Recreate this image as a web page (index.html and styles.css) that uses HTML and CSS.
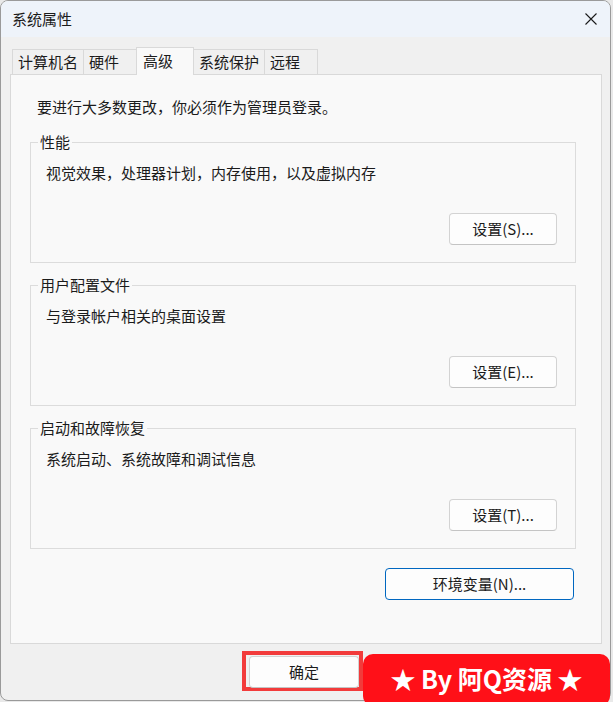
FILE: index.html
```html
<!DOCTYPE html>
<html lang="zh-CN">
<head>
<meta charset="utf-8">
<title>系统属性</title>
<link rel="stylesheet" href="styles.css">
</head>
<body>
<div class="window">
  <div class="titlebar">
    <span class="title">系统属性</span>
    <span class="close">
      <svg width="12" height="12" viewBox="0 0 12 12"><path d="M0.5 0.5 L11.5 11.5 M11.5 0.5 L0.5 11.5" stroke="#1a1a1a" stroke-width="1.1" fill="none"/></svg>
    </span>
  </div>
  <div class="content">
    <div class="tabs">
      <div class="tab">计算机名</div>
      <div class="tab">硬件</div>
      <div class="tab active">高级</div>
      <div class="tab">系统保护</div>
      <div class="tab">远程</div>
    </div>
    <div class="panel">
      <p class="notice">要进行大多数更改，你必须作为管理员登录。</p>
      <fieldset class="group">
        <legend>性能</legend>
        <p class="desc">视觉效果，处理器计划，内存使用，以及虚拟内存</p>
        <div class="row"><button class="btn">设置(S)...</button></div>
      </fieldset>
      <fieldset class="group">
        <legend>用户配置文件</legend>
        <p class="desc">与登录帐户相关的桌面设置</p>
        <div class="row"><button class="btn">设置(E)...</button></div>
      </fieldset>
      <fieldset class="group">
        <legend>启动和故障恢复</legend>
        <p class="desc">系统启动、系统故障和调试信息</p>
        <div class="row"><button class="btn">设置(T)...</button></div>
      </fieldset>
      <div class="env-row"><button class="btn env">环境变量(N)...</button></div>
    </div>
    <div class="footer">
      <div class="highlight"><button class="btn ok">确定</button></div>
    </div>
  </div>
</div>
<div class="banner">★ By 阿Q资源 ★</div>
</body>
</html>
```

FILE: styles.css
```css
* { box-sizing: border-box; }
html, body {
  margin: 0;
  padding: 0;
}
body {
  width: 613px;
  height: 702px;
  background: #e9e9e9;
  position: relative;
  overflow: hidden;
  font-family: "Noto Sans CJK SC", "Noto Sans", sans-serif;
  font-size: 15px;
  line-height: 20px;
  color: #1b1b1b;
}
.window {
  width: 611px;
  height: 701px;
  border: 1px solid #9a9a9a;
  border-radius: 8px;
  overflow: hidden;
  background: #f0f0f0;
  display: flex;
  flex-direction: column;
}
.titlebar {
  height: 36px;
  flex: none;
  background: #eef3fa;
  display: flex;
  align-items: center;
  justify-content: space-between;
  padding: 0 12px 0 11px;
}
.title { font-size: 15px; }
.close { display: flex; width: 12px; height: 12px; margin-right: 1px; }
.content {
  flex: 1;
  padding: 11px 8px 0 9px;
  display: flex;
  flex-direction: column;
}
.tabs {
  display: flex;
  align-items: flex-end;
  padding-left: 2px;
  height: 26px;
}
.tab {
  height: 25px;
  min-width: 54px;
  padding: 0 5px;
  border: 1px solid #d9d9d9;
  border-bottom: none;
  background: #f0f0f0;
  line-height: 23px;
  white-space: nowrap;
  margin-left: -1px;
}
.tab:first-child { margin-left: 0; }
.tab.active {
  height: 28px;
  background: #f9f9f9;
  margin-bottom: -1px;
  padding-left: 6px;
  line-height: 26px;
  position: relative;
  z-index: 1;
  min-width: 58px;
}
.panel {
  height: 570px;
  background: #f9f9f9;
  border: 1px solid #d9d9d9;
  padding: 22px 25px 0 19px;
  display: flex;
  flex-direction: column;
}
.notice {
  margin: 0 0 15px 7px;
}
.group {
  margin: 0 0 12px 0;
  padding: 11px 0 17px 0;
  border: 1px solid #dcdcdc;
  min-inline-size: 0;
}
.group legend {
  margin-left: 7px;
  padding: 0 2px;
  line-height: 20px;
}
.desc {
  margin: 0 0 0 15px;
}
.row {
  display: flex;
  justify-content: flex-end;
  margin-top: 30px;
  padding-right: 18px;
}
.btn {
  font-family: inherit;
  font-size: 15px;
  line-height: 20px;
  color: #1b1b1b;
  width: 108px;
  height: 32px;
  background: #fdfdfd;
  border: 1px solid #d3d3d3;
  border-bottom-color: #c4c4c4;
  border-radius: 4px;
  padding: 0;
}
.env-row {
  display: flex;
  justify-content: flex-end;
  margin-top: 7px;
  margin-right: 2px;
}
.btn.env {
  width: 189px;
  border: 1px solid #0067c0;
}
.footer {
  display: flex;
  padding: 7px 0 0 232px;
}
.highlight {
  border: 4px solid #f23b3b;
  padding: 1px 0 0 3px;
  width: 121px;
  height: 40px;
}
.btn.ok {
  width: 110px;
}
.banner {
  position: absolute;
  left: 363px;
  top: 654px;
  width: 247px;
  height: 52px;
  border-radius: 10px;
  background: #ff1018;
  color: #ffffff;
  font-weight: bold;
  font-size: 25px;
  line-height: 48px;
  text-align: center;
  white-space: nowrap;
}
```
